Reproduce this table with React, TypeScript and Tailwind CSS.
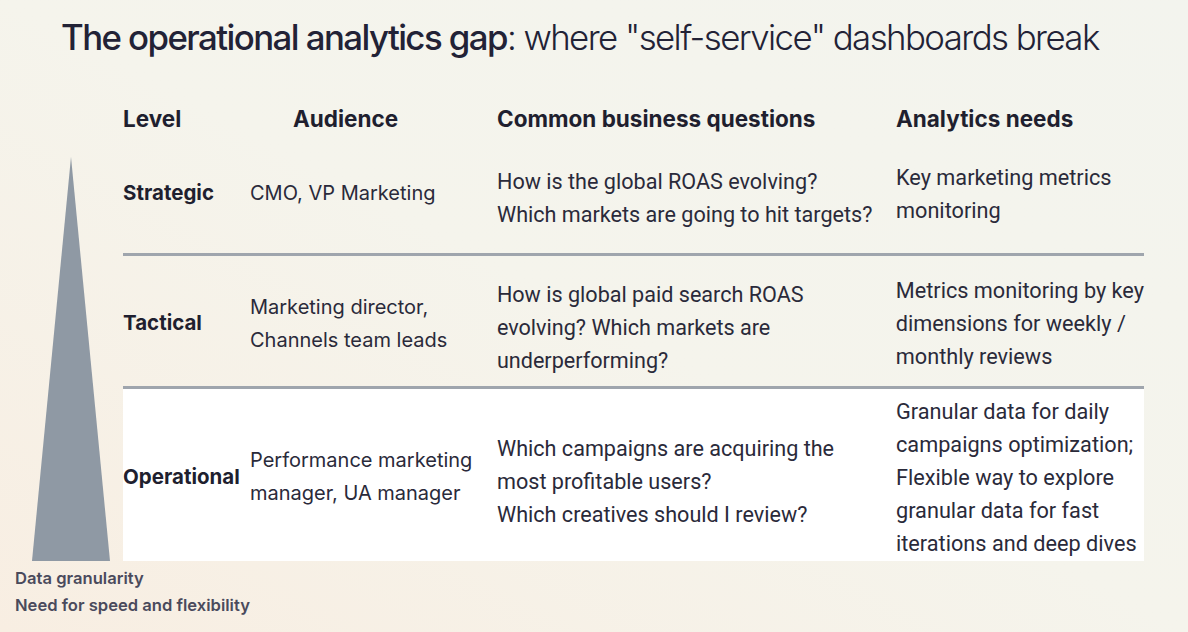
import React from "react";

// ─── Data ─────────────────────────────────────────────────────────────────────

type Row = {
  level: string;
  audience: string[];
  questions: string[];
  needs: string[];
  rowClass: string;
};

const rows: Row[] = [
  {
    level: "Strategic",
    audience: ["CMO, VP Marketing"],
    questions: ["How is the global ROAS evolving?", "Which markets are going to hit targets?"],
    needs: ["Key marketing metrics", "monitoring"],
    rowClass: "h-[106px] pb-[16px] border-b-[3px] border-[#9fa5ad]",
  },
  {
    level: "Tactical",
    audience: ["Marketing director,", "Channels team leads"],
    questions: ["How is global paid search ROAS", "evolving? Which markets are", "underperforming?"],
    needs: ["Metrics monitoring by key", "dimensions for weekly /", "monthly reviews"],
    rowClass: "h-[133px] pt-[5px] border-b-[3px] border-[#9fa5ad]",
  },
  {
    level: "Operational",
    audience: ["Performance marketing", "manager, UA manager"],
    questions: ["Which campaigns are acquiring the", "most profitable users?", "Which creatives should I review?"],
    needs: [
      "Granular data for daily",
      "campaigns optimization;",
      "Flexible way to explore",
      "granular data for fast",
      "iterations and deep dives",
    ],
    rowClass: "h-[172px] pt-[4px] bg-white",
  },
];

// ─── Pieces ───────────────────────────────────────────────────────────────────

function Lines({ items, className }: { items: string[]; className: string }) {
  return (
    <div className={className}>
      {items.map((t) => (
        <div key={t} className="whitespace-nowrap">
          {t}
        </div>
      ))}
    </div>
  );
}

function Pyramid() {
  return (
    <svg width="123" height="404" viewBox="0 0 123 404" className="block">
      <polygon points="71,0 110,404 32,404" fill="#8f99a4" />
    </svg>
  );
}

// ─── Page ─────────────────────────────────────────────────────────────────────

export default function App() {
  return (
    <div className="w-[1188px] h-[632px] overflow-hidden flex flex-col bg-linear-to-tr from-[#f8eee2] via-[#f5f4ec] to-[#f3f4ee] font-['Inter',sans-serif] text-[#232334]">
      <h1 className="pl-[61px] pt-[14px] h-[88px] text-[34.8px] leading-[46px] tracking-[-0.045em] whitespace-nowrap text-[#222236]">
        <span className="font-medium">The operational analytics gap</span>
        <span className="font-light">: where "self-service" dashboards break</span>
      </h1>

      {/* Header row */}
      <div className="flex h-[62px] items-center pl-[123px] text-[22.5px] font-bold text-[#1f1f2f]">
        <div className="w-[127px]">Level</div>
        <div className="w-[247px] text-center pr-[56px]">Audience</div>
        <div className="w-[399px]">Common business questions</div>
        <div>Analytics needs</div>
      </div>

      {/* Body */}
      <div className="flex">
        <div className="w-[123px] flex flex-col justify-end">
          <Pyramid />
        </div>
        <div className="w-[1021px] flex flex-col">
          {rows.map((r) => (
            <div key={r.level} className={`flex items-center ${r.rowClass}`}>
              <div className="w-[127px] text-[20.5px] font-bold text-[#1f1f2f]">{r.level}</div>
              <Lines items={r.audience} className="w-[247px] text-[20px] leading-[33px] text-[#2a2a3a]" />
              <Lines
                items={r.questions}
                className="w-[399px] pt-[8px] font-['Roboto',sans-serif] text-[21.6px] leading-[33px] text-[#2a2a3a]"
              />
              <Lines
                items={r.needs}
                className="flex-1 font-['Roboto',sans-serif] text-[21.7px] leading-[33px] text-[#2a2a3a]"
              />
            </div>
          ))}
        </div>
      </div>

      {/* Axis labels */}
      <div className="pl-[15px] pt-[4px] text-[16.6px] font-semibold leading-[27px] text-[#4a4a5c]">
        <div>Data granularity</div>
        <div>Need for speed and flexibility</div>
      </div>
    </div>
  );
}
